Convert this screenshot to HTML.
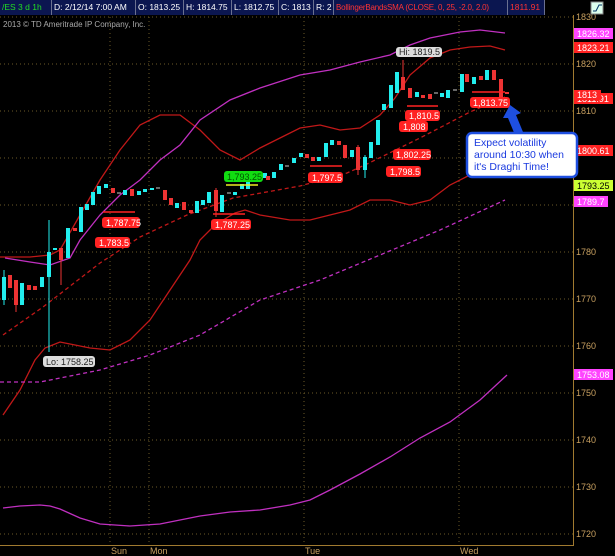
<!DOCTYPE html>
<html><head><meta charset="utf-8"><style>
html,body{margin:0;padding:0;background:#000;width:615px;height:556px;overflow:hidden;font-family:"Liberation Sans",sans-serif}
#bar{position:absolute;left:0;top:0;width:545px;height:15px;background:#0b1650;font-size:8.5px;line-height:15px;white-space:nowrap}
#bar span{position:absolute;top:0;height:15px;border-right:1px solid #6a7090;padding-left:2px;color:#fff;box-sizing:border-box;overflow:hidden}
svg{position:absolute;left:0;top:0}
</style></head><body>
<svg width="615" height="556" xmlns="http://www.w3.org/2000/svg" font-family="Liberation Sans, sans-serif">
<g stroke="#6b5a28" stroke-dasharray="1,3" stroke-width="1">
<line x1="0" y1="17" x2="573" y2="17"/><line x1="0" y1="64" x2="573" y2="64"/><line x1="0" y1="111" x2="573" y2="111"/><line x1="0" y1="158" x2="573" y2="158"/><line x1="0" y1="205" x2="573" y2="205"/><line x1="0" y1="252" x2="573" y2="252"/><line x1="0" y1="299" x2="573" y2="299"/><line x1="0" y1="346" x2="573" y2="346"/><line x1="0" y1="393" x2="573" y2="393"/><line x1="0" y1="440" x2="573" y2="440"/><line x1="0" y1="487" x2="573" y2="487"/><line x1="0" y1="534" x2="573" y2="534"/>
<line x1="110" y1="17" x2="110" y2="545"/><line x1="149" y1="17" x2="149" y2="545"/><line x1="304" y1="17" x2="304" y2="545"/><line x1="459" y1="17" x2="459" y2="545"/>
</g>
<line x1="573.5" y1="15" x2="573.5" y2="545" stroke="#a07a30"/>
<line x1="0" y1="545.5" x2="574" y2="545.5" stroke="#a07a30"/>
<g fill="#c8a060" font-size="9">
<text x="576" y="20">1830</text><text x="576" y="67">1820</text><text x="576" y="114">1810</text><text x="576" y="255">1780</text><text x="576" y="302">1770</text><text x="576" y="349">1760</text><text x="576" y="396">1750</text><text x="576" y="443">1740</text><text x="576" y="490">1730</text><text x="576" y="537">1720</text>
<text x="111" y="554">Sun</text><text x="150" y="554">Mon</text><text x="305" y="554">Tue</text><text x="460" y="554">Wed</text>
</g>
<text x="3" y="27" fill="#aaa" font-size="8">2013 © TD Ameritrade IP Company, Inc.</text>
<g fill="none" stroke-width="1.3">
<polyline stroke="#c01818" points="0,257 30,257 50,255 60,250 80,215 100,180 120,150 140,125 160,115 180,115 200,130 220,150 240,160 260,148 280,138 300,128 320,125 340,130 360,128 380,115 395,98 410,75 430,58 450,50 470,47 490,46 505,50"/>
<polyline stroke="#c01818" stroke-dasharray="4,3" points="3,335 43,307 100,263 140,237 187,215 233,198 300,186 347,173 367,164 420,138 470,112 505,97"/>
<polyline stroke="#c01818" points="3,415 20,390 35,360 45,348 60,342 75,345 90,348 110,350 130,340 150,320 170,290 190,260 200,240 215,225 235,213 245,210 260,215 290,220 310,220 330,215 350,210 370,200 390,200 410,205 430,200 450,185 470,175 490,160 507,150"/>
<polyline stroke="#c030c0" points="5,258 30,262 50,265 70,258 80,240 100,215 120,195 140,180 160,160 180,145 200,120 230,100 260,88 300,75 330,70 360,62 390,55 410,45 430,38 460,32 480,30 505,33"/>
<polyline stroke="#c030c0" stroke-dasharray="4,3" points="0,382 40,382 100,370 150,355 200,335 260,300 320,280 380,255 440,230 505,200"/>
<polyline stroke="#c030c0" points="3,508 20,506 40,505 50,506 60,509 80,518 100,524 130,526 160,524 200,516 230,512 260,510 290,505 310,500 330,490 360,474 390,457 420,438 450,422 480,400 507,375"/>
</g>
<g stroke-width="1">
<line x1="49" y1="220" x2="49" y2="352" stroke="#2ee"/>
<line x1="61" y1="248" x2="61" y2="285" stroke="#e33"/>
<line x1="216" y1="188" x2="216" y2="217" stroke="#e33"/>
<line x1="403" y1="60" x2="403" y2="90" stroke="#e33"/>
<line x1="358" y1="145" x2="358" y2="175" stroke="#e33"/>
<line x1="365" y1="155" x2="365" y2="178" stroke="#2ee"/>
<line x1="4" y1="270" x2="4" y2="305" stroke="#2ee"/>
<line x1="16" y1="280" x2="16" y2="312" stroke="#e33"/>
</g>
<g fill="#2ee">
<rect x="2" y="277" width="4" height="23"/><rect x="20" y="283" width="4" height="22"/><rect x="40" y="277" width="4" height="10"/><rect x="47" y="252" width="4" height="25"/><rect x="53" y="248" width="4" height="2"/><rect x="66" y="228" width="4" height="30"/><rect x="79" y="207" width="4" height="25"/><rect x="85" y="204" width="4" height="6"/><rect x="91" y="192" width="4" height="13"/><rect x="97" y="186" width="4" height="8"/><rect x="104" y="184" width="4" height="4"/><rect x="123" y="190" width="4" height="5"/><rect x="137" y="191" width="4" height="4"/><rect x="143" y="189" width="4" height="3"/><rect x="150" y="188" width="4" height="2"/><rect x="175" y="203" width="4" height="5"/><rect x="195" y="201" width="4" height="12"/><rect x="201" y="200" width="4" height="5"/><rect x="207" y="192" width="4" height="11"/><rect x="220" y="195" width="4" height="17"/><rect x="233" y="192" width="4" height="3"/><rect x="240" y="184" width="4" height="5"/><rect x="246" y="179" width="4" height="10"/><rect x="263" y="173" width="4" height="5"/><rect x="272" y="172" width="4" height="6"/><rect x="279" y="164" width="4" height="6"/><rect x="292" y="158" width="4" height="5"/><rect x="299" y="153" width="4" height="4"/><rect x="317" y="157" width="4" height="4"/><rect x="324" y="143" width="4" height="14"/><rect x="330" y="140" width="4" height="5"/><rect x="350" y="150" width="4" height="7"/><rect x="363" y="157" width="4" height="13"/><rect x="369" y="142" width="4" height="16"/><rect x="376" y="120" width="4" height="25"/><rect x="382" y="104" width="4" height="6"/><rect x="389" y="85" width="4" height="23"/><rect x="395" y="72" width="4" height="21"/><rect x="415" y="92" width="4" height="5"/><rect x="440" y="93" width="4" height="4"/><rect x="446" y="90" width="4" height="8"/><rect x="460" y="74" width="4" height="18"/><rect x="472" y="77" width="4" height="7"/><rect x="485" y="70" width="4" height="10"/>
</g>
<g fill="#e33">
<rect x="8" y="275" width="4" height="13"/><rect x="14" y="280" width="4" height="25"/><rect x="27" y="285" width="4" height="5"/><rect x="33" y="286" width="4" height="4"/><rect x="59" y="248" width="4" height="12"/><rect x="73" y="228" width="4" height="3"/><rect x="111" y="188" width="4" height="5"/><rect x="130" y="189" width="4" height="7"/><rect x="163" y="190" width="4" height="10"/><rect x="169" y="198" width="4" height="7"/><rect x="182" y="202" width="4" height="8"/><rect x="189" y="210" width="4" height="3"/><rect x="214" y="190" width="4" height="21"/><rect x="253" y="177" width="4" height="3"/><rect x="266" y="176" width="4" height="4"/><rect x="305" y="154" width="4" height="4"/><rect x="311" y="157" width="4" height="4"/><rect x="337" y="141" width="4" height="4"/><rect x="343" y="145" width="4" height="13"/><rect x="356" y="147" width="4" height="23"/><rect x="401" y="77" width="4" height="13"/><rect x="408" y="88" width="4" height="10"/><rect x="421" y="95" width="4" height="3"/><rect x="428" y="94" width="4" height="5"/><rect x="465" y="74" width="4" height="8"/><rect x="479" y="76" width="4" height="4"/><rect x="492" y="70" width="4" height="10"/><rect x="499" y="79" width="4" height="19"/><rect x="505" y="92" width="4" height="2"/>
</g>
<g stroke="#ccc"><line x1="117" y1="193" x2="121" y2="193"/><line x1="156" y1="188" x2="160" y2="188"/><line x1="227" y1="193" x2="231" y2="193"/><line x1="258" y1="175" x2="262" y2="175"/><line x1="285" y1="166" x2="289" y2="166"/><line x1="434" y1="93" x2="438" y2="93"/><line x1="453" y1="90" x2="457" y2="90"/></g>
<g stroke="#f22" stroke-width="1.5"><line x1="103" y1="212" x2="135" y2="212"/><line x1="213" y1="214" x2="245" y2="214"/><line x1="310" y1="166" x2="342" y2="166"/><line x1="407" y1="106" x2="438" y2="106"/><line x1="472" y1="92" x2="505" y2="92"/></g>
<line x1="226" y1="185" x2="258" y2="185" stroke="#ee2" stroke-width="1.5"/>
<g font-size="9" fill="#fff">
<rect x="102" y="217" width="38" height="11" rx="3" fill="#f22"/><text x="106" y="226">1,787.75</text>
<rect x="95" y="237" width="35" height="11" rx="3" fill="#f22"/><text x="99" y="246">1,783.5</text>
<rect x="211" y="219" width="40" height="11" rx="3" fill="#f22"/><text x="215" y="228">1,787.25</text>
<rect x="308" y="172" width="35" height="11" rx="3" fill="#f22"/><text x="312" y="181">1,797.5</text>
<rect x="393" y="149" width="38" height="11" rx="3" fill="#f22"/><text x="396" y="158">1,802.25</text>
<rect x="386" y="166" width="35" height="11" rx="3" fill="#f22"/><text x="390" y="175">1,798.5</text>
<rect x="399" y="121" width="29" height="11" rx="3" fill="#f22"/><text x="403" y="130">1,808</text>
<rect x="405" y="110" width="35" height="11" rx="3" fill="#f22"/><text x="409" y="119">1,810.5</text>
<rect x="470" y="97" width="40" height="11" rx="3" fill="#f22"/><text x="473" y="106">1,813.75</text>
<rect x="224" y="171" width="39" height="11" rx="3" fill="#1d1"/><text x="227" y="180" fill="#050">1,793.25</text>
<rect x="396" y="47" width="46" height="10" rx="3" fill="#ddd"/><text x="399" y="55" fill="#222">Hi: 1819.5</text>
<rect x="43" y="356" width="52" height="11" rx="3" fill="#ddd"/><text x="46" y="365" fill="#222">Lo: 1758.25</text>
</g>
<g font-size="9">
<rect x="574" y="28" width="39" height="11" fill="#f4f"/><text x="577" y="37" fill="#fff">1826.32</text>
<rect x="574" y="42" width="39" height="11" fill="#f22"/><text x="577" y="51" fill="#fff">1823.21</text>
<rect x="574" y="93" width="39" height="11" fill="#f22"/><text x="577" y="102" fill="#fff">1811.91</text>
<rect x="574" y="90" width="27" height="10" fill="#f22"/><text x="577" y="98" fill="#fff">1813</text>
<rect x="574" y="145" width="39" height="11" fill="#f22"/><text x="577" y="154" fill="#fff">1800.61</text>
<rect x="574" y="180" width="39" height="11" fill="#cf3"/><text x="577" y="189" fill="#000">1793.25</text>
<rect x="574" y="196" width="34" height="11" fill="#f4f"/><text x="577" y="205" fill="#fff">1789.7</text>
<rect x="574" y="369" width="39" height="11" fill="#f4f"/><text x="577" y="378" fill="#fff">1753.08</text>
</g>
<rect x="591" y="2" width="12" height="12" fill="#dfe" stroke="#888"/><path d="M593 11 L596 11 L599 5 L602 5" stroke="#036" fill="none"/>
<path d="M510 105 L503 118 L508 118 L515 135 L523 132 L516 115 L521 113 Z" fill="#1e4fe0"/>
<rect x="467" y="133" width="110" height="44" rx="5" fill="#fff" stroke="#1e4fe0" stroke-width="2.5"/>
<g font-size="10.5" fill="#1a3adf"><text x="474" y="146">Expect volatility</text><text x="474" y="158">around 10:30 when</text><text x="474" y="170">it's Draghi Time!</text></g>
</svg>
<div id="bar">
<span style="left:0;width:52px;color:#2d2">/ES 3 d 1h</span>
<span style="left:52px;width:84px">D: 2/12/14 7:00 AM</span>
<span style="left:136px;width:48px">O: 1813.25</span>
<span style="left:184px;width:48px">H: 1814.75</span>
<span style="left:232px;width:47px">L: 1812.75</span>
<span style="left:279px;width:35px">C: 1813</span>
<span style="left:314px;width:20px">R: 2</span>
<span style="left:334px;width:174px;color:#f33;font-size:8px;letter-spacing:-0.2px">BollingerBandsSMA (CLOSE, 0, 25, -2.0, 2.0)</span>
<span style="left:508px;width:37px;color:#f33">1811.91</span>
</div>
</body></html>
